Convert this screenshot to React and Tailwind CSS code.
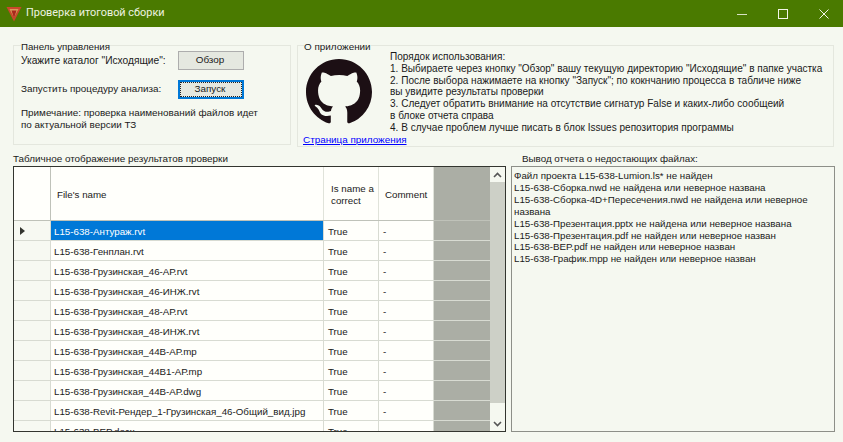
const files = [
  'L15-638-Антураж.rvt',
  'L15-638-Генплан.rvt',
  'L15-638-Грузинская_46-АР.rvt',
  'L15-638-Грузинская_46-ИНЖ.rvt',
  'L15-638-Грузинская_48-АР.rvt',
  'L15-638-Грузинская_48-ИНЖ.rvt',
  'L15-638-Грузинская_44В-АР.mp',
  'L15-638-Грузинская_44В1-АР.mp',
  'L15-638-Грузинская_44В-АР.dwg',
  'L15-638-Revit-Рендер_1-Грузинская_46-Общий_вид.jpg',
  'L15-638-BEP.docx',
];

const report = [
  'Файл проекта L15-638-Lumion.ls* не найден',
  'L15-638-Сборка.nwd не найдена или неверное названа',
  'L15-638-Сборка-4D+Пересечения.nwd не найдена или неверное названа',
  'L15-638-Презентация.pptx не найдена или неверное названа',
  'L15-638-Презентация.pdf не найден или неверное назван',
  'L15-638-BEP.pdf не найден или неверное назван',
  'L15-638-График.mpp не найден или неверное назван',
];

function FileRow({ name, selected }) {
  return (
    <div className="flex h-5 shrink-0 border-b border-[#d8dbd2] text-[9.75px]">
      <div className="flex w-[37px] shrink-0 items-center border-r border-[#d8dbd2] bg-[#f7f9f2] pl-[6px]">
        {selected && <div className="h-0 w-0 border-y-[4px] border-l-[5px] border-y-transparent border-l-[#33352f]" />}
      </div>
      <div className={`w-[273px] shrink-0 border-r border-[#d8dbd2] pl-[3px] pt-px leading-[19px] whitespace-nowrap ${selected ? 'bg-[#0078d7] text-white' : 'bg-[#fffffb]'}`}>
        {name}
      </div>
      <div className="w-[55px] shrink-0 border-r border-[#d8dbd2] bg-[#fffffb] pl-[4px] pt-px leading-[19px]">True</div>
      <div className="w-[55px] shrink-0 border-r border-[#d8dbd2] bg-[#fffffb] pl-[4px] pt-px leading-[19px]">-</div>
    </div>
  );
}

export default function App() {
  return (
    <div className="flex h-[442px] w-[843px] flex-col overflow-hidden bg-[#f5f8f0] font-['Liberation_Sans',sans-serif] text-[9.9px] text-[#1a1a1a]">
      {/* title bar */}
      <div className="flex h-[27px] shrink-0 items-center bg-[#4a7a00] text-white">
        <svg width="16" height="16" viewBox="0 0 16 16" className="ml-[6px]">
          <path d="M0.5 1 L15.5 1 L8 15.5 Z" fill="#c9482c" />
          <path d="M3.5 3 L12.5 3 L8 11.5 Z" fill="#d99a5a" />
          <path d="M5.5 4.5 L10.5 4.5 L8 12 Z" fill="#a8281c" />
        </svg>
        <span className="ml-[4px] font-['Roboto',sans-serif] text-[10.9px] text-[#eef3e2]">Проверка итоговой сборки</span>
        <div className="ml-auto flex items-center gap-[31px] pr-[14px]">
          <svg width="10" height="10" viewBox="0 0 10 10" stroke="#d8e2c4" strokeWidth="1"><path d="M0 5.5 H10" /></svg>
          <svg width="10" height="10" viewBox="0 0 10 10" fill="none" stroke="#f2f5e8" strokeWidth="1"><rect x="0.5" y="0.5" width="9" height="9" /></svg>
          <svg width="10" height="10" viewBox="0 0 10 10" stroke="#f2f5e8" strokeWidth="1"><path d="M0.5 0.5 L9.5 9.5 M9.5 0.5 L0.5 9.5" /></svg>
        </div>
      </div>

      <div className="flex gap-[6px] pl-[13px] pt-[18px]">
        {/* control panel */}
        <div className="relative h-[100px] w-[278px] border border-[#e4e7de] pl-[7px] pt-[5px]">
          <span className="absolute -top-[6px] left-[7px] bg-[#f5f8f0] text-[9.7px]">Панель управления</span>
          <div className="flex items-center">
            <span className="w-[157px] pt-[1px] text-[10.2px]">Укажите каталог "Исходящие":</span>
            <button className="h-[19px] w-[66px] border border-[#adadad] bg-[#e5e8e0] pr-[2px]">Обзор</button>
          </div>
          <div className="mt-[10px] flex items-center">
            <span className="w-[157px]">Запустить процедуру анализа:</span>
            <button className="h-[19px] w-[66px] border-2 border-[#0078d7] bg-[#e5e8e0] pr-[2px] outline-1 -outline-offset-3 outline-dotted outline-[#222]">Запуск</button>
          </div>
          <p className="mt-[8px] w-[250px] leading-[12px]">Примечание: проверка наименований файлов идет по актуальной версии ТЗ</p>
        </div>

        {/* about */}
        <div className="relative h-[102px] w-[537px] border border-[#e4e7de]">
          <span className="absolute -top-[6px] left-[6px] bg-[#f5f8f0]">О приложении</span>
          <div className="flex pl-[8px] pt-[13px]">
            <svg width="66" height="66" viewBox="0 0 16 16" className="shrink-0" fill="#1c0f14">
              <path d="M8 0C3.58 0 0 3.58 0 8c0 3.54 2.29 6.53 5.47 7.59.4.07.55-.17.55-.38 0-.19-.01-.82-.01-1.49-2.01.37-2.53-.49-2.69-.94-.09-.23-.48-.94-.82-1.13-.28-.15-.68-.52-.01-.53.63-.01 1.08.58 1.23.82.72 1.21 1.87.87 2.33.66.07-.52.28-.87.51-1.07-1.78-.2-3.64-.89-3.64-3.95 0-.87.31-1.59.82-2.15-.08-.2-.36-1.02.08-2.12 0 0 .67-.21 2.2.82.64-.18 1.32-.27 2-.27.68 0 1.36.09 2 .27 1.53-1.04 2.2-.82 2.2-.82.44 1.1.16 1.92.08 2.12.51.56.82 1.27.82 2.15 0 3.07-1.87 3.75-3.65 3.95.29.25.54.73.54 1.48 0 1.07-.01 1.93-.01 2.2 0 .21.15.46.55.38A8.013 8.013 0 0016 8c0-4.42-3.58-8-8-8z" />
            </svg>
            <div className="ml-[18px] -mt-[8px] whitespace-nowrap text-[10.05px] leading-[11.8px]">
              <p>Порядок использования:</p>
              <p>1. Выбираете через кнопку "Обзор" вашу текущую директорию "Исходящие" в папке участка</p>
              <p>2. После выбора нажимаете на кнопку "Запуск"; по кокнчанию процесса в табличе ниже</p>
              <p>вы увидите результаты проверки</p>
              <p>3. Следует обратить внимание на отсутствие сигнатур False и каких-либо сообщеий</p>
              <p>в блоке отчета справа</p>
              <p>4. В случае проблем лучше писать в блок Issues репозитория программы</p>
            </div>
          </div>
          <a className="absolute bottom-[-2px] left-[5px] text-[#0000ff] underline">Страница приложения</a>
        </div>
      </div>

      <div className="mt-[5px] flex pl-[13px]">
        <div className="w-[498px]">
          <div className="h-[14px] leading-[14px]">Табличное отображение результатов проверки</div>
          {/* grid */}
          <div className="flex h-[266px] w-[493px] overflow-hidden border border-[#33352f] bg-[#abaea5]">
            <div className="w-[476px] shrink-0 overflow-hidden">
              <div className="flex h-[54px] border-b border-[#bfc2b9] text-[9.75px]">
                <div className="w-[37px] shrink-0 border-r border-[#bfc2b9] bg-[#fffffb]" />
                <div className="flex w-[273px] shrink-0 items-center border-r border-[#e0e3da] bg-[#fffffb] pl-[6px] pt-[3px]">File's name</div>
                <div className="flex w-[55px] shrink-0 items-center border-r border-[#e0e3da] bg-[#fffffb] pl-[7px] pt-[3px] leading-[12px]">Is name a correct</div>
                <div className="flex w-[55px] shrink-0 items-center border-r border-[#e0e3da] bg-[#fffffb] pl-[6px] pt-[3px]">Comment</div>
              </div>
              {files.map((f, i) => (
                <FileRow key={f} name={f} selected={i === 0} />
              ))}
            </div>
            {/* scrollbar */}
            <div className="flex w-[15px] shrink-0 flex-col bg-[#f5f8f0]">
              <div className="flex h-[15px] items-center justify-center text-[#555]">
                <svg width="9" height="6" viewBox="0 0 9 6" fill="none" stroke="currentColor" strokeWidth="1.6"><path d="M1 5 L4.5 1.5 L8 5" /></svg>
              </div>
              <div className="h-[221px] bg-[#cdd0c7]" />
              <div className="mt-auto flex h-[15px] items-center justify-center text-[#555]">
                <svg width="9" height="6" viewBox="0 0 9 6" fill="none" stroke="currentColor" strokeWidth="1.6"><path d="M1 1 L4.5 4.5 L8 1" /></svg>
              </div>
            </div>
          </div>
        </div>
        {/* report */}
        <div className="w-[324px]">
          <div className="h-[14px] pl-[11px] text-[9.8px] leading-[14px]">Вывод отчета о недостающих файлах:</div>
          <div className="h-[266px] border border-[#8d8f88] px-[2px] pt-[3px] text-[9.75px] leading-[11.9px]">
            {report.map((r) => (
              <p key={r}>{r}</p>
            ))}
          </div>
        </div>
      </div>
    </div>
  );
}
